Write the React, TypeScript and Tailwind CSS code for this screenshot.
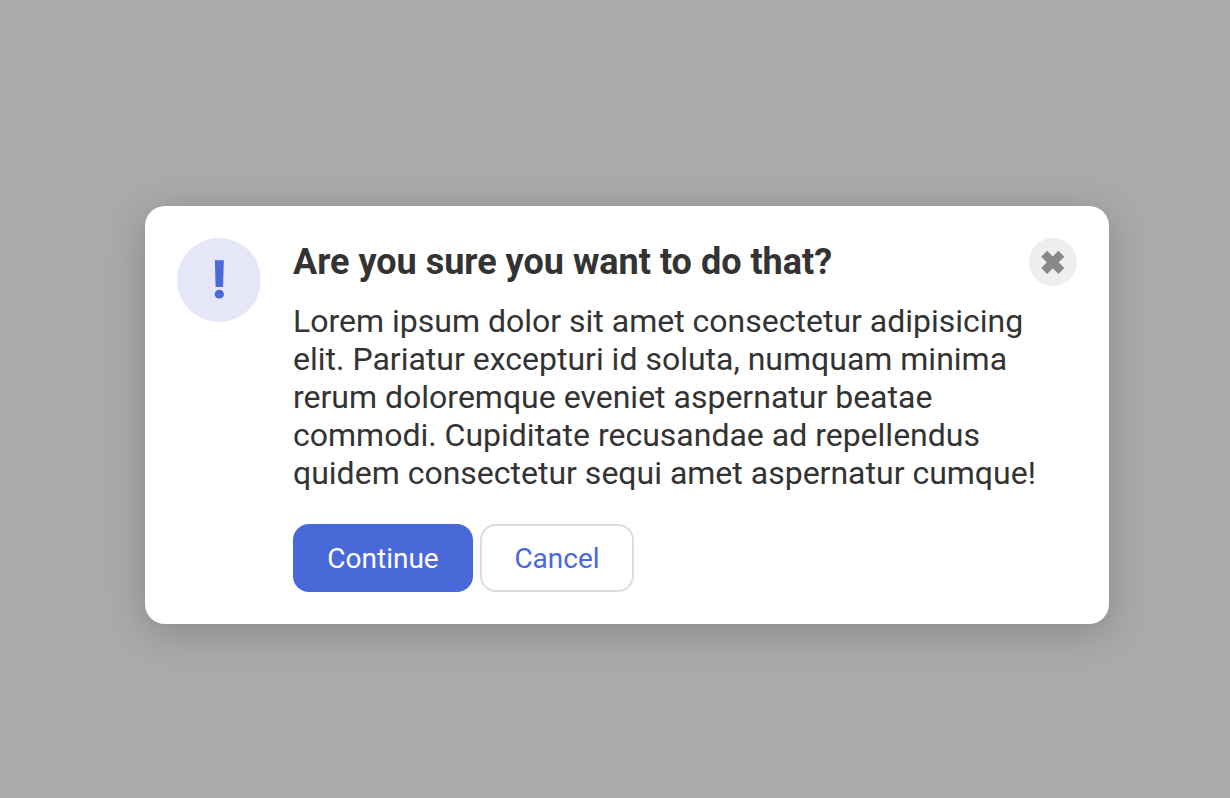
export default function App() {
  return (
    <div className="flex h-[798px] w-[1230px] items-start bg-[#aaaaaa] pl-[145px] pt-[206px] font-['Roboto',sans-serif] text-[#333333]">
      <div role="dialog" className="flex h-[418px] w-[964px] items-start gap-8 rounded-[20px] bg-white p-8 shadow-[0_8px_40px_rgba(0,0,0,0.2)]">
        <div className="flex size-[84px] shrink-0 items-center justify-center rounded-full bg-[#e5e6f8]">
          <svg width="16" height="42" viewBox="0 0 16 42" fill="#4a69d9" aria-hidden="true">
            <path d="M3.9 1.2h8.9L12.1 28H4.6z" />
            <ellipse cx="8.3" cy="35.2" rx="4.6" ry="4.4" />
          </svg>
        </div>
        <div className="flex w-[784px] flex-col">
          <div className="flex h-12 items-center justify-between">
            <h2 className="whitespace-nowrap text-[36px] font-bold leading-[48px]">Are you sure you want to do that?</h2>
            <button aria-label="Close" className="flex size-12 items-center justify-center rounded-full bg-[#eeeeee]">
              <svg width="24" height="26" viewBox="0 0 24 26" aria-hidden="true">
                <path d="M3.2 4.8L20.4 22M20.4 4.8L3.2 22" stroke="#888888" strokeWidth="8.3" />
              </svg>
            </button>
          </div>
          <p className="mt-4 whitespace-nowrap text-[32px] leading-[38px]">
            Lorem ipsum dolor sit amet consectetur adipisicing<br />
            elit. Pariatur excepturi id soluta, numquam minima<br />
            rerum doloremque eveniet aspernatur beatae<br />
            commodi. Cupiditate recusandae ad repellendus<br />
            quidem consectetur sequi amet aspernatur cumque!
          </p>
          <div className="mt-8 flex gap-[7px] text-[28px] leading-[32px]">
            <button className="h-[68px] w-[180px] rounded-2xl bg-[#4a69d9] pt-0.5 text-white">Continue</button>
            <button className="h-[68px] w-[154px] rounded-2xl border-2 border-[#dddddd] pt-0.5 text-[#4a69d9]">Cancel</button>
          </div>
        </div>
      </div>
    </div>
  );
}
